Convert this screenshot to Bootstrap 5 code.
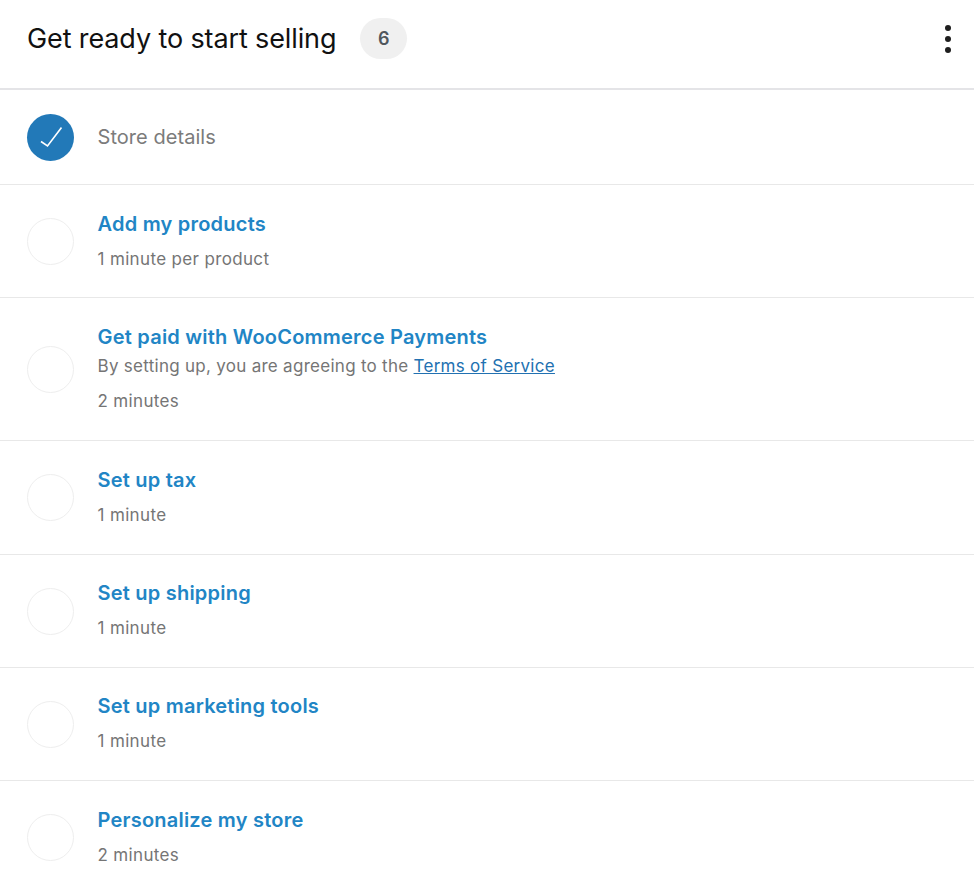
<!DOCTYPE html>
<html lang="en">
<head>
<meta charset="utf-8">
<title>Get ready to start selling</title>
<link rel="stylesheet" href="https://cdn.jsdelivr.net/npm/bootstrap@5.3.0/dist/css/bootstrap.min.css">
<style>
html,body{height:887px;overflow:hidden;background:#fff}
body{font-family:Inter,"Liberation Sans",sans-serif;color:#757575}
.setup-head{height:90px;border-bottom:2px solid #e4e4e7;padding:0 23px 11px 27px}
.setup-title{font-size:27px;font-weight:400;color:#111;margin:0;line-height:1;letter-spacing:-.12px}
.count-pill{width:47px;height:41px;border-radius:21px;background:#f0f0f0;color:#50575e;font-size:18px;font-weight:600;margin-left:24px}
.kebab{gap:5px}
.kebab i{display:block;width:6px;height:6px;border-radius:50%;background:#1e1e1e}
.step{padding-left:26.5px;border-bottom:1px solid #e8e8e8;gap:24px}
.step-done{height:95px}
.step-short{height:113px}
.step-tall{height:143px}
.step-wide{height:114px}
.step-last{border-bottom:0}
.tick{width:47px;height:47px;border-radius:50%;flex:none}
.tick-on{background:#2279b8}
.tick-off{border:1px solid #eeeeee}
.step-copy{padding-bottom:2px}
.step-first{padding-bottom:0}
.step-name{font-size:20px;font-weight:600;color:#2185c5;line-height:24px;letter-spacing:.22px}
.step-plain{font-size:20px;color:#7b7b7b;line-height:24px;letter-spacing:.05px}
.step-note{font-size:17px;line-height:22px;color:#757575;letter-spacing:.28px;margin-top:6px}
.step-time{font-size:17px;line-height:22px;color:#757575;margin-top:12px;letter-spacing:.35px}
.step-note a{color:#2271b1}
.step-note + .step-time{margin-top:13px}
</style>
</head>
<body>
<header class="setup-head d-flex align-items-center">
  <h1 class="setup-title">Get ready to start selling</h1>
  <span class="count-pill d-flex align-items-center justify-content-center">6</span>
  <div class="kebab ms-auto d-flex flex-column align-items-center"><i></i><i></i><i></i></div>
</header>
<main>
  <div class="step step-done d-flex align-items-center">
    <span class="tick tick-on d-flex align-items-center justify-content-center">
      <svg width="24" height="24" viewBox="0 0 24 24" fill="none" stroke="#fff" stroke-width="1.6"><path d="M3 16.500L9.500 21L23.500 2.500"/></svg>
    </span>
    <div class="step-plain">Store details</div>
  </div>
  <div class="step step-short d-flex align-items-center">
    <span class="tick tick-off"></span>
    <div class="step-copy step-first"><div class="step-name">Add my products</div><div class="step-time">1 minute per product</div></div>
  </div>
  <div class="step step-tall d-flex align-items-center">
    <span class="tick tick-off"></span>
    <div class="step-copy"><div class="step-name">Get paid with WooCommerce Payments</div><div class="step-note">By setting up, you are agreeing to the <a href="#">Terms of Service</a></div><div class="step-time">2 minutes</div></div>
  </div>
  <div class="step step-wide d-flex align-items-center">
    <span class="tick tick-off"></span>
    <div class="step-copy"><div class="step-name">Set up tax</div><div class="step-time">1 minute</div></div>
  </div>
  <div class="step step-short d-flex align-items-center">
    <span class="tick tick-off"></span>
    <div class="step-copy"><div class="step-name">Set up shipping</div><div class="step-time">1 minute</div></div>
  </div>
  <div class="step step-short d-flex align-items-center">
    <span class="tick tick-off"></span>
    <div class="step-copy"><div class="step-name">Set up marketing tools</div><div class="step-time">1 minute</div></div>
  </div>
  <div class="step step-short step-last d-flex align-items-center">
    <span class="tick tick-off"></span>
    <div class="step-copy"><div class="step-name">Personalize my store</div><div class="step-time">2 minutes</div></div>
  </div>
</main>
</body>
</html>
